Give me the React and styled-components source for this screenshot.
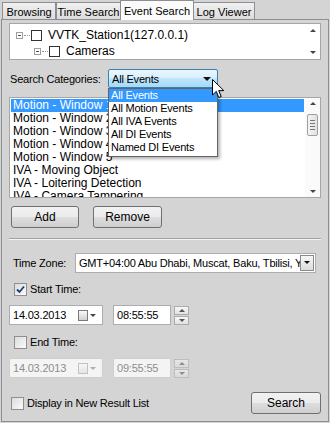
import React from 'react';
import styled, {createGlobalStyle} from 'styled-components';

const GlobalStyle = createGlobalStyle`
  html, body { margin: 0; padding: 0; background: #d4d4d4; }
  body { font-family: "Liberation Sans", Arial, sans-serif; font-size: 11px; letter-spacing: -0.2px; color: #000; }
`;

// Styled
const Window = styled.div`
  width: 330px;
  height: 423px;
  display: flex;
  flex-direction: column;
  background: #d4d4d4;
  position: relative;
  overflow: hidden;
`;
const TabBar = styled.div`
  display: flex;
  align-items: flex-end;
  height: 20px;
  padding-left: 2px;
  position: relative;
  z-index: 2;
`;
const Tab = styled.div`
  height: ${p => p.active ? 20 : 18}px;
  width: ${p => p.w}px;
  box-sizing: border-box;
  border: 1px solid #8c8e94;
  border-bottom: ${p => p.active ? 'none' : '1px solid #8c8e94'};
  margin-left: ${p => p.active ? -1 : 0}px;
  margin-right: ${p => p.active ? -1 : 0}px;
  background: ${p => p.active ? '#fbfbfb' : 'linear-gradient(#f0f0f0, #dcdcdc)'};
  display: flex;
  align-items: center;
  justify-content: center;
  letter-spacing: 0;
  white-space: nowrap;
  padding-top: ${p => p.active ? 0 : 1}px;
  position: relative;
  z-index: ${p => p.active ? 3 : 1};
`;
const Panel = styled.div`
  flex: 1;
  margin: -1px 1px 1px 1px;
  border: 1px solid #8c8e94;
  background: #d4d4d4;
  padding: 3px 7px 0 7px;
  display: flex;
  flex-direction: column;
`;
const WhiteBox = styled.div`
  background: #fff;
  border: 1px solid #a4a6aa;
  height: ${p => p.h}px;
  margin-top: ${p => p.mt}px;
  display: flex;
  position: relative;
  box-sizing: border-box;
`;
const TreeContent = styled.div`
  flex: 1;
  padding: 3px 0 0 6px;
  font-size: 12px;
  letter-spacing: 0;
`;
const TreeRow = styled.div`
  height: 16px;
  display: flex;
  align-items: center;
  padding-left: ${p => p.indent}px;
`;
const Expander = styled.span`
  width: 7px;
  height: 7px;
  border: 1px solid #a0a0a0;
  position: relative;
  box-sizing: border-box;
  &::after {
    content: '';
    position: absolute;
    left: 1px;
    top: 2px;
    width: 3px;
    height: 1px;
    background: #555;
  }
`;
const Dots = styled.span`
  width: 6px;
  border-top: 1px dotted #999;
  margin: 0 1px;
`;
const TreeCheck = styled.span`
  width: 11px;
  height: 11px;
  border: 1px solid #333;
  box-sizing: border-box;
  background: #fff;
  margin-right: 6px;
`;
const ArrowCol = styled.div`
  width: 14px;
  display: flex;
  flex-direction: column;
  justify-content: space-between;
  align-items: center;
  padding: 5px 0;
  background: #fff;
`;
const Tri = styled.span`
  width: 0;
  height: 0;
  border-left: ${p => p.s || 3}px solid transparent;
  border-right: ${p => p.s || 3}px solid transparent;
  ${p => p.up ? `border-bottom: ${p.s || 3}px solid ${p.c || '#444'};` : `border-top: ${p.s || 3}px solid ${p.c || '#444'};`}
`;
const Row = styled.div`
  display: flex;
  align-items: center;
  height: ${p => p.h}px;
  margin-top: ${p => p.mt}px;
`;
const Label = styled.span`
  width: ${p => p.w}px;
  padding-left: ${p => p.pl || 1}px;
  white-space: nowrap;
  box-sizing: border-box;
`;
const ComboHot = styled.div`
  width: 110px;
  height: 19px;
  box-sizing: border-box;
  border: 1px solid #3c7fb1;
  border-radius: 2px;
  background: linear-gradient(#eaf6fd 0%, #d9f0fc 45%, #bee6fd 50%, #a7d9f5 100%);
  display: flex;
  align-items: center;
  justify-content: space-between;
  padding: 0 6px 0 3px;
  position: relative;
`;
const DropList = styled.div`
  position: absolute;
  left: -1px;
  top: 18px;
  width: 110px;
  box-sizing: border-box;
  background: #fff;
  border: 1px solid #646464;
  box-shadow: 2px 2px 3px rgba(0,0,0,0.3);
  z-index: 5;
  padding: 0 0 2px 0;
`;
const DropItem = styled.div`
  height: 13px;
  line-height: 13px;
  padding-left: 2px;
  white-space: nowrap;
  background: ${p => p.sel ? '#3399ff' : 'transparent'};
  color: ${p => p.sel ? '#fff' : '#000'};
`;
const ListContent = styled.div`
  flex: 1;
  padding: 1px 1px 0 1px;
  overflow: hidden;
  font-size: 12px;
  letter-spacing: 0;
`;
const ListItem = styled.div`
  height: 13px;
  line-height: 13px;
  padding-left: 2px;
  white-space: nowrap;
  background: ${p => p.sel ? '#3399ff' : 'transparent'};
  color: ${p => p.sel ? '#fff' : '#000'};
`;
const Thumb = styled.div`
  width: 11px;
  height: 22px;
  margin-top: 9px;
  box-sizing: border-box;
  border: 1px solid #a0a0a0;
  border-radius: 2px;
  background: linear-gradient(90deg, #f4f4f4, #e2e2e2);
  display: flex;
  flex-direction: column;
  align-items: center;
  justify-content: center;
  gap: 2px;
  & > span { width: 5px; height: 1px; background: #777; }
`;
const ScrollBar = styled.div`
  width: 15px;
  display: flex;
  flex-direction: column;
  align-items: center;
  padding: 4px 0;
  background: #fafafa;
`;
const Filler = styled.div`
  flex: 1;
`;
const Button = styled.button`
  width: ${p => p.w}px;
  height: 22px;
  border: 1px solid #707070;
  border-radius: 3px;
  background: linear-gradient(#f2f2f2 0%, #ebebeb 50%, #dddddd 51%, #cfcfcf 100%);
  font-family: inherit;
  font-size: 12px;
  color: #000;
  padding: 0;
  margin-left: ${p => p.ml || 0}px;
`;
const Separator = styled.div`
  height: 0;
  border-top: 1px solid #a0a0a0;
  border-bottom: 1px solid #f4f4f4;
  margin-top: ${p => p.mt}px;
`;
const Field = styled.div`
  width: ${p => p.w}px;
  height: 20px;
  box-sizing: border-box;
  border: 1px solid ${p => p.disabled ? '#cfcfcf' : '#abadb3'};
  background: ${p => p.disabled ? '#f4f4f4' : '#fff'};
  color: ${p => p.disabled ? '#8d8d8d' : '#000'};
  display: flex;
  align-items: center;
  padding-left: 3px;
  margin-left: ${p => p.ml || 0}px;
  white-space: nowrap;
  overflow: hidden;
`;
const FieldText = styled.span`
  flex: 1;
  overflow: hidden;
`;
const DropBtn = styled.div`
  width: 14px;
  height: 16px;
  margin-right: 1px;
  box-sizing: border-box;
  border: 1px solid #8a8a8a;
  background: linear-gradient(#f6f6f6, #dcdcdc);
  display: flex;
  align-items: center;
  justify-content: center;
  flex-shrink: 0;
`;
const CalIcon = styled.div`
  display: flex;
  align-items: center;
  gap: 2px;
  margin-right: 6px;
  opacity: ${p => p.disabled ? 0.4 : 1};
`;
const CalBox = styled.span`
  width: 10px;
  height: 11px;
  box-sizing: border-box;
  border: 1px solid #7a7a7a;
  background: linear-gradient(#fafafa, #d0d0d0);
`;
const Spin = styled.div`
  display: flex;
  flex-direction: column;
  gap: 1px;
  margin-left: 3px;
  opacity: ${p => p.disabled ? 0.55 : 1};
`;
const SpinBtn = styled.div`
  width: 15px;
  height: 9px;
  box-sizing: border-box;
  border: 1px solid #acacac;
  background: linear-gradient(#f7f7f7, #e1e1e1);
  display: flex;
  align-items: center;
  justify-content: center;
`;
const Check = styled.span`
  width: 13px;
  height: 13px;
  box-sizing: border-box;
  border: 1px solid #8f8f8f;
  background: linear-gradient(135deg, #dcdcdc, #fbfbfb);
  display: inline-flex;
  align-items: center;
  justify-content: center;
  margin-right: 3px;
`;
const CheckRow = styled.label`
  display: flex;
  align-items: center;
  padding-left: ${p => p.pl || 5}px;
`;
const Cursor = styled.svg`
  position: absolute;
  left: 103px;
  top: 9px;
  z-index: 6;
`;

const categories = ['All Events', 'All Motion Events', 'All IVA Events', 'All DI Events', 'Named DI Events'];
const eventItems = [
    'Motion - Window 1', 'Motion - Window 2', 'Motion - Window 3', 'Motion - Window 4',
    'Motion - Window 5', 'IVA - Moving Object', 'IVA - Loitering Detection', 'IVA - Camera Tampering'
];
const tabs = [
    {name: 'Browsing', w: 54},
    {name: 'Time Search', w: 65},
    {name: 'Event Search', w: 74, active: true},
    {name: 'Log Viewer', w: 62},
];

const Tick = () => (
    <svg width="9" height="9" viewBox="0 0 9 9">
        <path d="M1 4.5 L3.5 7 L8 1.5" fill="none" stroke="#1c3c78" strokeWidth="1.8"/>
    </svg>
);

const DateField = ({value, disabled}) => (
    <Field w={94} disabled={disabled}>
        <FieldText>{value}</FieldText>
        <CalIcon disabled={disabled}>
            <CalBox/>
            <Tri s={3} c="#444"/>
        </CalIcon>
    </Field>
);

const TimeField = ({value, disabled}) => (
    <>
        <Field w={58} ml={10} disabled={disabled}>
            <FieldText>{value}</FieldText>
        </Field>
        <Spin disabled={disabled}>
            <SpinBtn><Tri up s={3} c="#555"/></SpinBtn>
            <SpinBtn><Tri s={3} c="#555"/></SpinBtn>
        </Spin>
    </>
);

const App = () => (
    <Window>
        <GlobalStyle/>
        <TabBar>
            {tabs.map(t => <Tab key={t.name} w={t.w} active={t.active}>{t.name}</Tab>)}
        </TabBar>
        <Panel>
            <WhiteBox h={37} mt={0}>
                <TreeContent>
                    <TreeRow indent={0}>
                        <Expander/><Dots/><TreeCheck/>VVTK_Station1(127.0.0.1)
                    </TreeRow>
                    <TreeRow indent={18}>
                        <Expander/><Dots/><TreeCheck/>Cameras
                    </TreeRow>
                </TreeContent>
                <ArrowCol>
                    <Tri up s={3}/>
                    <Tri s={3}/>
                </ArrowCol>
            </WhiteBox>

            <Row h={19} mt={9}>
                <Label w={99}>Search Categories:</Label>
                <ComboHot>
                    All Events
                    <Tri s={4} c="#111"/>
                    <DropList>
                        {categories.map((c, i) => <DropItem key={c} sel={i === 0}>{c}</DropItem>)}
                    </DropList>
                    <Cursor width="13" height="20" viewBox="0 0 13 20">
                        <path d="M0.5 0.5 L0.5 16 L4.3 12.4 L6.8 18.5 L9.2 17.5 L6.7 11.6 L11.8 11.6 Z"
                              fill="#fff" stroke="#000" strokeWidth="1"/>
                    </Cursor>
                </ComboHot>
            </Row>

            <WhiteBox h={101} mt={9}>
                <ListContent>
                    {eventItems.map((e, i) => <ListItem key={e} sel={i === 0}>{e}</ListItem>)}
                </ListContent>
                <ScrollBar>
                    <Tri up s={3}/>
                    <Thumb><span/><span/><span/><span/></Thumb>
                    <Filler/>
                    <Tri s={3}/>
                </ScrollBar>
            </WhiteBox>

            <Row h={22} mt={8}>
                <Button w={68} ml={2}>Add</Button>
                <Button w={69} ml={14}>Remove</Button>
            </Row>

            <Separator mt={10}/>

            <Row h={21} mt={12}>
                <Label w={66} pl={4}>Time Zone:</Label>
                <Field w={241}>
                    <FieldText>GMT+04:00 Abu Dhabi, Muscat, Baku, Tbilisi, Yerevan</FieldText>
                    <DropBtn><Tri s={3} c="#111"/></DropBtn>
                </Field>
            </Row>

            <Row h={14} mt={9}>
                <CheckRow><Check><Tick/></Check>Start Time:</CheckRow>
            </Row>

            <Row h={20} mt={9}>
                <DateField value="14.03.2013"/>
                <TimeField value="08:55:55"/>
            </Row>

            <Row h={14} mt={10}>
                <CheckRow><Check/>End Time:</CheckRow>
            </Row>

            <Row h={20} mt={9}>
                <DateField value="14.03.2013" disabled/>
                <TimeField value="09:55:55" disabled/>
            </Row>

            <Row h={22} mt={14}>
                <CheckRow pl={2}><Check/>Display in New Result List</CheckRow>
                <Filler/>
                <Button w={70}>Search</Button>
            </Row>
        </Panel>
    </Window>
);

export default App;
